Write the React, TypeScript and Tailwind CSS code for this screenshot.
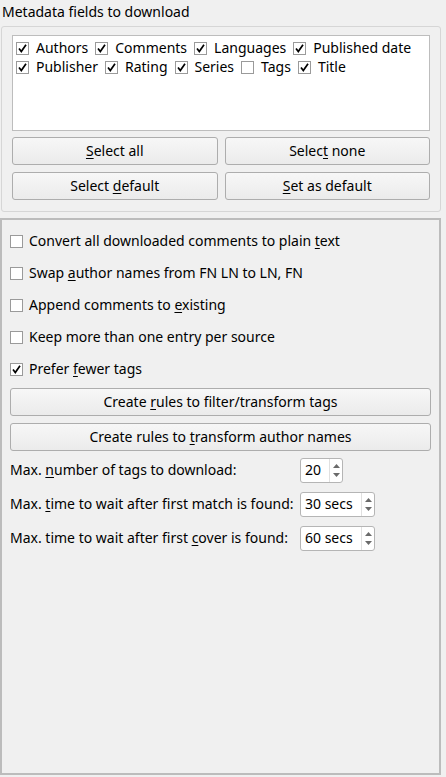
import React from "react";

function Check({ checked }: { checked: boolean }) {
  return (
    <span className="inline-flex w-[13px] h-[13px] shrink-0 border border-[#9a9a9a] bg-white items-center justify-center">
      {checked && (
        <svg width="11" height="11" viewBox="0 0 11 11">
          <path d="M2 5.5 L4.3 8.6 L9 1.8" fill="none" stroke="#000" strokeWidth="1.7" />
        </svg>
      )}
    </span>
  );
}

function U({ children }: { children: React.ReactNode }) {
  return <span className="underline underline-offset-[2px] decoration-[1px]">{children}</span>;
}

function Btn({ children }: { children: React.ReactNode }) {
  return (
    <div className="h-[28px] flex items-center justify-center rounded-[3px] border border-[#adadad] bg-gradient-to-b from-[#f7f7f7] to-[#ebebeb] text-black">
      <span className="whitespace-pre">{children}</span>
    </div>
  );
}

function Spin({ value, width }: { value: string; width: string }) {
  return (
    <div className={`h-[25px] ${width} flex rounded-[3px] border border-[#b5b5b5] bg-white`}>
      <div className="flex-1 flex items-center pl-[4px]">{value}</div>
      <div className="w-[13px] border-l border-[#e0e0e0] flex flex-col items-center justify-center gap-[5px]">
        <svg width="7" height="4" viewBox="0 0 7 4">
          <path d="M0 4 L3.5 0 L7 4 Z" fill="#6a6a6a" />
        </svg>
        <svg width="7" height="4" viewBox="0 0 7 4">
          <path d="M0 0 L3.5 4 L7 0 Z" fill="#6a6a6a" />
        </svg>
      </div>
    </div>
  );
}

const topRow1: [string, boolean][] = [
  ["Authors", true],
  ["Comments", true],
  ["Languages", true],
  ["Published date", true],
];
const topRow2: [string, boolean][] = [
  ["Publisher", true],
  ["Rating", true],
  ["Series", true],
  ["Tags", false],
  ["Title", true],
];

function Item({ label, checked }: { label: string; checked: boolean }) {
  return (
    <div className="flex items-center gap-[7px] mr-[7px]">
      <Check checked={checked} />
      <span>{label}</span>
    </div>
  );
}

function Row({ checked, children }: { checked: boolean; children: React.ReactNode }) {
  return (
    <div className="h-[32px] flex items-center gap-[6px]">
      <Check checked={checked} />
      <span className="whitespace-pre">{children}</span>
    </div>
  );
}

export default function App() {
  return (
    <div
      className="w-[446px] h-[777px] bg-[#f0f0f0] text-black text-[14px] leading-[18px] overflow-hidden"
      style={{ fontFamily: '"Noto Sans", sans-serif' }}
    >
      <div className="pl-[2px] pt-[3px] h-[26px]">Metadata fields to download</div>
      <div className="ml-[1px] w-[440px] border border-[#d6d6d6] rounded-[3px] px-[10px] pt-[8px] pb-[11px]">
        <div className="h-[96px] bg-white border border-[#bdbdbd] pl-[3px] pt-[3px] flex flex-col gap-[1px]">
          <div className="flex">
            {topRow1.map(([l, c]) => (
              <Item key={l} label={l} checked={c} />
            ))}
          </div>
          <div className="flex">
            {topRow2.map(([l, c]) => (
              <Item key={l} label={l} checked={c} />
            ))}
          </div>
        </div>
        <div className="grid grid-cols-2 gap-x-[7px] gap-y-[7px] mt-[6px]">
          <Btn>
            <U>S</U>elect all
          </Btn>
          <Btn>
            Selec<U>t</U> none
          </Btn>
          <Btn>
            Select <U>d</U>efault
          </Btn>
          <Btn>
            <U>S</U>et as default
          </Btn>
        </div>
      </div>
      <div className="mt-[6px] w-[441px] h-[557px] border-2 border-[#bcbcbc] px-[8px] pt-[5px]">
        <div className="flex flex-col">
          <Row checked={false}>
            Convert all downloaded comments to plain <U>t</U>ext
          </Row>
          <Row checked={false}>
            Swap <U>a</U>uthor names from FN LN to LN, FN
          </Row>
          <Row checked={false}>
            Append comments to <U>e</U>xisting
          </Row>
          <Row checked={false}>Keep more than one entry per source</Row>
          <Row checked={true}>
            Prefer <U>f</U>ewer tags
          </Row>
        </div>
        <div className="mt-[3px] flex flex-col gap-[7px]">
          <Btn>
            Create <U>r</U>ules to filter/transform tags
          </Btn>
          <Btn>
            Create rules to <U>t</U>ransform author names
          </Btn>
        </div>
        <div className="mt-[6px] flex flex-col gap-[8px]">
          <div className="h-[26px] flex items-center">
            <div className="w-[290px] whitespace-pre">
              Max. <U>n</U>umber of tags to download:
            </div>
            <Spin value="20" width="w-[43px]" />
          </div>
          <div className="h-[26px] flex items-center">
            <div className="w-[290px] whitespace-pre">
              Max. <U>t</U>ime to wait after first match is found:
            </div>
            <Spin value="30 secs" width="w-[75px]" />
          </div>
          <div className="h-[26px] flex items-center">
            <div className="w-[290px] whitespace-pre">
              Max. time to wait after first <U>c</U>over is found:
            </div>
            <Spin value="60 secs" width="w-[75px]" />
          </div>
        </div>
      </div>
    </div>
  );
}
